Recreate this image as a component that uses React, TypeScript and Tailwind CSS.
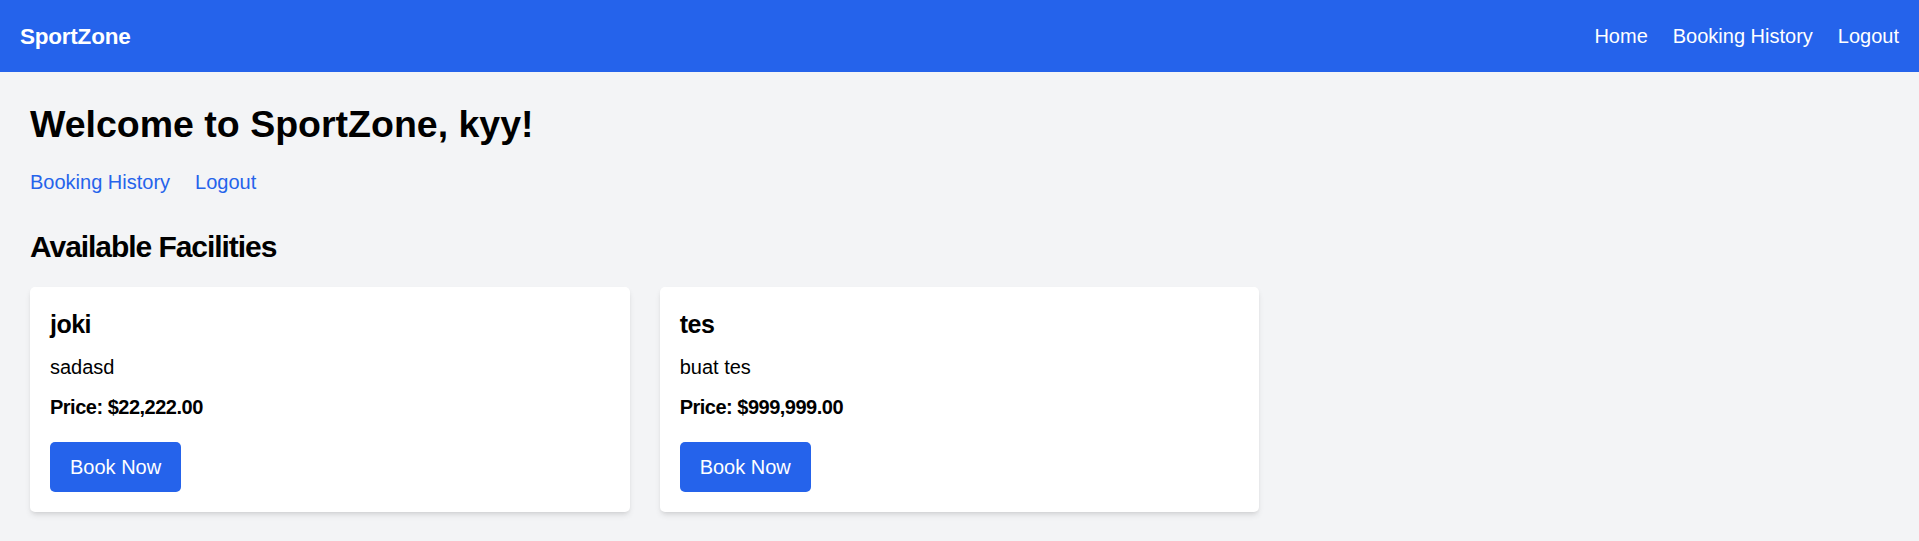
import React from "react";

type Facility = {
  id: number;
  name: string;
  description: string;
  price: number;
};

const facilities: Facility[] = [
  { id: 1, name: "joki", description: "sadasd", price: 22222 },
  { id: 2, name: "tes", description: "buat tes", price: 999999 },
];

const formatPrice = (n: number) =>
  "$" + n.toLocaleString("en-US", { minimumFractionDigits: 2, maximumFractionDigits: 2 });

function Navbar() {
  return (
    <nav className="h-[72px] bg-[#2563eb] px-5 flex items-center justify-between text-white">
      <a href="#" className="text-[22.5px] leading-[35px] font-bold tracking-[-0.01em]">
        SportZone
      </a>
      <div className="flex items-center gap-[25px] text-[20px] leading-[30px]">
        <a href="#">Home</a>
        <a href="#">Booking History</a>
        <a href="#">Logout</a>
      </div>
    </nav>
  );
}

function FacilityCard({ item }: { item: Facility }) {
  return (
    <div className="bg-white rounded-[5px] shadow-md p-5">
      <h3 className="text-[25px] leading-[35px] font-semibold tracking-[-0.02em] mb-[10px]">{item.name}</h3>
      <p className="text-[20px] leading-[30px] mb-[10px]">{item.description}</p>
      <p className="text-[20px] leading-[30px] font-semibold tracking-[-0.025em] mb-5">
        Price: {formatPrice(item.price)}
      </p>
      <button className="bg-[#2563eb] text-white text-[20px] leading-[30px] px-5 py-[10px] rounded-[5px]">
        Book Now
      </button>
    </div>
  );
}

export default function App() {
  return (
    <div className="min-h-screen bg-[#f3f4f6] text-black font-['Liberation_Sans',Arial,sans-serif]">
      <Navbar />
      <main className="p-[30px]">
        <h1 className="text-[37.5px] leading-[45px] font-bold mb-5">Welcome to SportZone, kyy!</h1>
        <div className="flex gap-[25px] text-[20px] leading-[30px] text-[#2563eb] mb-[30px]">
          <a href="#">Booking History</a>
          <a href="#">Logout</a>
        </div>
        <h2 className="text-[30px] leading-[40px] font-semibold tracking-[-0.035em] mb-5">Available Facilities</h2>
        <div className="grid grid-cols-3 gap-[30px]">
          {facilities.map((f) => (
            <FacilityCard key={f.id} item={f} />
          ))}
        </div>
      </main>
    </div>
  );
}
